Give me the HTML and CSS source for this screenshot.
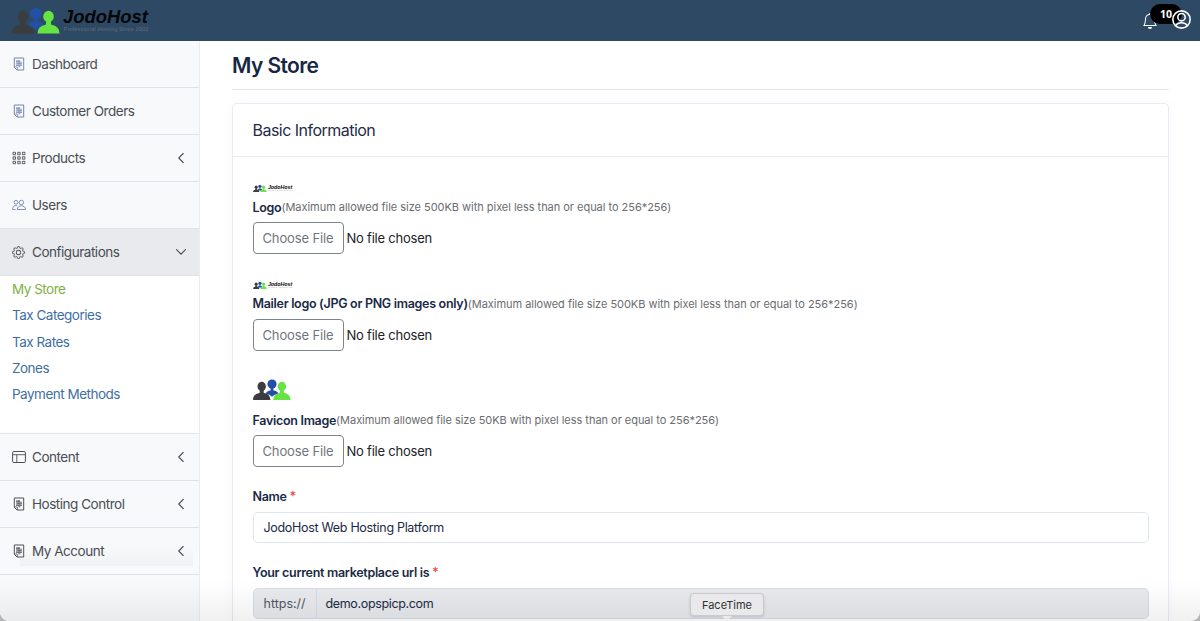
FILE: index.html
```html
<!DOCTYPE html>
<html lang="en">
<head>
<meta charset="utf-8">
<title>My Store</title>
<link rel="stylesheet" href="styles.css">
</head>
<body>
<svg class="defs" aria-hidden="true">
  <symbol id="people" viewBox="0 0 48 28">
    <g fill="#2350a4"><circle cx="24" cy="6.500" r="5.800"/><path d="M22.200 11h3.600v3.500q5 .5 6 3.500-1 2-4.500 2L24 22.500 20.700 20q-3.500 0-4.500-2 1-3 6-3.500z"/></g>
    <g fill="#3b3c3e"><ellipse cx="11" cy="9.500" rx="5.300" ry="5.800"/><path d="M8.500 14h5v3.500Q22 19 22 26.500H0Q0 19 8.500 17.500z"/></g>
    <g fill="#66e444"><ellipse cx="36.500" cy="9.500" rx="5.300" ry="5.800"/><path d="M34 14h5v3.500q8.500 1.500 8.500 9h-22Q25.500 19 34 17.500z"/></g>
  </symbol>
  <symbol id="logo" viewBox="0 0 138 28" overflow="visible">
    <use href="#people" width="48" height="28"/>
    <text x="51.500" y="16.500" textLength="84" lengthAdjust="spacingAndGlyphs" class="logo-name">JodoHost</text>
    <text x="52" y="24" textLength="84" lengthAdjust="spacingAndGlyphs" class="logo-tag">Professional Hosting Since 2002</text>
  </symbol>
  <symbol id="doc" viewBox="0 0 14 14">
    <path d="M2.300 1h9.400v12H5L2.300 10.300z" fill="none" stroke="currentColor"/>
    <path d="M2.300 10h3v3" fill="none" stroke="currentColor" stroke-width=".8"/>
    <path d="M4 3h4v1.500h2V9H8.500v1.500h-2V9H4z" fill="currentColor" opacity=".5"/>
    <path d="M4 4.500h4M5 6.500h5M4 8.500h6M7 3v7" fill="none" stroke="currentColor" stroke-width=".5"/>
  </symbol>
  <symbol id="grid" viewBox="0 0 14 14">
    <path d="M1 1.300h2.500v2.400H1zM5.700 1.300h2.500v2.400H5.700zM10.400 1.300h2.500v2.400h-2.500zM1 5.800h2.500v2.400H1zM5.700 5.800h2.500v2.400H5.700zM10.400 5.800h2.500v2.400h-2.500zM1 10.300h2.500v2.400H1zM5.700 10.300h2.500v2.400H5.700zM10.400 10.300h2.500v2.400h-2.500z" fill="none" stroke="currentColor" stroke-width=".9"/>
  </symbol>
  <symbol id="users" viewBox="0 0 14 14">
    <g fill="none" stroke="currentColor" stroke-width=".9"><circle cx="4" cy="4.300" r="1.900"/><circle cx="9.400" cy="4.500" r="2.200"/><path d="M5.200 11.500c0-5 8.300-5 8.300 0zM5.200 7.800C2.500 7 .7 8.400.6 11.500h3"/></g>
  </symbol>
  <symbol id="gear" viewBox="0 0 16 16">
    <path fill="currentColor" d="M8 4.754a3.246 3.246 0 1 0 0 6.492 3.246 3.246 0 0 0 0-6.492M5.754 8a2.246 2.246 0 1 1 4.492 0 2.246 2.246 0 0 1-4.492 0"/>
    <path fill="currentColor" d="M9.796 1.343c-.527-1.790-3.065-1.790-3.592 0l-.094.319a.873.873 0 0 1-1.255.520l-.292-.160c-1.640-.892-3.433.902-2.540 2.541l.159.292a.873.873 0 0 1-.520 1.255l-.319.094c-1.790.527-1.790 3.065 0 3.592l.319.094a.873.873 0 0 1 .520 1.255l-.160.292c-.892 1.640.901 3.434 2.541 2.540l.292-.159a.873.873 0 0 1 1.255.520l.094.319c.527 1.790 3.065 1.790 3.592 0l.094-.319a.873.873 0 0 1 1.255-.520l.292.160c1.640.893 3.434-.902 2.540-2.541l-.159-.292a.873.873 0 0 1 .520-1.255l.319-.094c1.790-.527 1.790-3.065 0-3.592l-.319-.094a.873.873 0 0 1-.520-1.255l.160-.292c.893-1.640-.902-3.433-2.541-2.540l-.292.159a.873.873 0 0 1-1.255-.520zm-2.633.283c.246-.835 1.428-.835 1.674 0l.094.319a1.873 1.873 0 0 0 2.693 1.115l.291-.160c.764-.415 1.600.420 1.184 1.185l-.159.292a1.873 1.873 0 0 0 1.116 2.692l.318.094c.835.246.835 1.428 0 1.674l-.319.094a1.873 1.873 0 0 0-1.115 2.693l.160.291c.415.764-.420 1.600-1.185 1.184l-.291-.159a1.873 1.873 0 0 0-2.693 1.116l-.094.318c-.246.835-1.428.835-1.674 0l-.094-.319a1.873 1.873 0 0 0-2.692-1.115l-.292.160c-.764.415-1.600-.420-1.184-1.185l.159-.291A1.873 1.873 0 0 0 1.945 8.930l-.319-.094c-.835-.246-.835-1.428 0-1.674l.319-.094A1.873 1.873 0 0 0 3.060 4.377l-.160-.292c-.415-.764.420-1.600 1.185-1.184l.292.159a1.873 1.873 0 0 0 2.692-1.115z"/>
  </symbol>
  <symbol id="layout" viewBox="0 0 14 14">
    <rect x=".6" y="1.500" width="12.800" height="11" rx="1.300" fill="none" stroke="currentColor"/><path d="M.6 4.700h12.800M4.800 4.700v7.800" stroke="currentColor" stroke-width=".9"/>
  </symbol>
  <symbol id="left" viewBox="0 0 12 12"><path d="M8.200 1.500 3.700 6l4.500 4.500" fill="none" stroke="currentColor" stroke-width="1.100" stroke-linecap="round"/></symbol>
  <symbol id="down" viewBox="0 0 12 12"><path d="M1.500 3.700 6 8.200l4.500-4.500" fill="none" stroke="currentColor" stroke-width="1.100" stroke-linecap="round"/></symbol>
</svg>

<header class="topbar">
  <svg class="brand" viewBox="0 -7 150 41">
    <use href="#people" width="48" height="28"/>
    <text x="51" y="16" textLength="85" lengthAdjust="spacingAndGlyphs" class="logo-name">JodoHost</text>
    <text x="51.500" y="24" textLength="85" lengthAdjust="spacingAndGlyphs" class="logo-tag">Professional Hosting Since 2002</text>
  </svg>
  <div class="tools">
    <svg class="bell" viewBox="0 0 16 16"><path fill="currentColor" d="M8 16a2 2 0 0 0 2-2H6a2 2 0 0 0 2 2M8 1.918l-.797.161A4 4 0 0 0 4 6c0 .628-.134 2.197-.459 3.742-.160.767-.376 1.566-.663 2.258h10.244c-.287-.692-.502-1.490-.663-2.258C12.134 8.197 12 6.628 12 6a4 4 0 0 0-3.203-3.920zM14.220 12c.223.447.481.801.780 1H1c.299-.199.557-.553.780-1C2.680 10.200 3 6.880 3 6c0-2.420 1.720-4.440 4.005-4.901a1 1 0 1 1 1.990 0A5 5 0 0 1 13 6c0 .880.320 4.200 1.220 6"/></svg>
    <span class="count">10</span>
    <svg class="user" viewBox="0 0 18 18"><g fill="none" stroke="currentColor" stroke-width="1.500"><circle cx="9" cy="9" r="8.200"/><circle cx="9" cy="6.800" r="3.500"/><path d="M3.300 15c2.300-4 9.100-4 11.400 0"/></g></svg>
  </div>
</header>

<div class="shell">
  <nav class="sidebar">
    <a class="item tinted"><svg class="ico"><use href="#doc"/></svg><span>Dashboard</span></a>
    <a class="item tinted"><svg class="ico"><use href="#doc"/></svg><span>Customer Orders</span></a>
    <a class="item"><svg class="ico"><use href="#grid"/></svg><span>Products</span><svg class="chev"><use href="#left"/></svg></a>
    <a class="item tinted"><svg class="ico"><use href="#users"/></svg><span>Users</span></a>
    <a class="item active"><svg class="ico small" viewBox="0 0 16 16"><use href="#gear"/></svg><span>Configurations</span><svg class="chev"><use href="#down"/></svg></a>
    <div class="submenu">
      <a class="current">My Store</a>
      <a>Tax Categories</a>
      <a>Tax Rates</a>
      <a>Zones</a>
      <a>Payment Methods</a>
    </div>
    <a class="item"><svg class="ico"><use href="#layout"/></svg><span>Content</span><svg class="chev"><use href="#left"/></svg></a>
    <a class="item"><svg class="ico"><use href="#doc"/></svg><span>Hosting Control</span><svg class="chev"><use href="#left"/></svg></a>
    <a class="item last"><svg class="ico"><use href="#doc"/></svg><span>My Account</span><svg class="chev"><use href="#left"/></svg></a>
  </nav>

  <main class="main">
    <h1>My Store</h1>
    <section class="card">
      <h2>Basic Information</h2>
      <div class="body">
        <div class="upload">
          <svg class="thumb"><use href="#logo"/></svg>
          <div class="label"><b>Logo</b><small>(Maximum allowed file size 500KB with pixel less than or equal to 256*256)</small></div>
          <div class="file"><button>Choose File</button><span>No file chosen</span></div>
        </div>
        <div class="upload">
          <svg class="thumb"><use href="#logo"/></svg>
          <div class="label"><b>Mailer logo (JPG or PNG images only)</b><small>(Maximum allowed file size 500KB with pixel less than or equal to 256*256)</small></div>
          <div class="file"><button>Choose File</button><span>No file chosen</span></div>
        </div>
        <div class="upload favicon">
          <svg class="thumb"><use href="#people"/></svg>
          <div class="label"><b>Favicon Image</b><small>(Maximum allowed file size 50KB with pixel less than or equal to 256*256)</small></div>
          <div class="file"><button>Choose File</button><span>No file chosen</span></div>
        </div>
        <div class="field">
          <div class="label"><b>Name <i>*</i></b></div>
          <div class="input">JodoHost Web Hosting Platform</div>
        </div>
        <div class="field url">
          <div class="label"><b>Your current marketplace url is <i>*</i></b></div>
          <div class="group"><span class="prefix">https://</span><span class="value">demo.opspicp.com</span></div>
        </div>
      </div>
    </section>
  </main>
</div>
<div class="shade"></div>
<div class="tooltip">FaceTime</div>
</body>
</html>
```
FILE: styles.css
```css
* { box-sizing: border-box; }
html { background: #b5b5b5; }
body { margin: 0; height: 621px; overflow: hidden; position: relative; background: #b5b5b5; font-family: Inter, "Liberation Sans", sans-serif; font-size: 13px; color: #1b2a45; display: flex; flex-direction: column; }
.defs { position: absolute; width: 0; height: 0; }
svg { display: block; flex: none; }
.logo-name { font: italic bold 17.500px "Liberation Sans", sans-serif; fill: #050608; }
.logo-tag { font: 6px "Liberation Sans", sans-serif; fill: #777c83; fill-opacity: .7; }

.topbar { flex: none; height: 41px; background: #2e4964; display: flex; justify-content: space-between; padding: 0 9px 0 11.500px; }
.brand { width: 150px; height: 41px; }
.tools { display: flex; padding-top: 7px; color: #fff; }
.bell { width: 16px; height: 16px; margin-top: 5.500px; }
.count { width: 32px; height: 20px; margin: -3px 0 0 -8px; padding-left: 10px; border-radius: 10px; background: #000; font: bold 10.500px/20px "Open Sans", sans-serif; }
.user { width: 19px; height: 19px; margin: 3px 0 0 -10px; }

.shell { flex: 1; min-height: 0; display: flex; background: #fff; border-radius: 0 0 9px 9px; overflow: hidden; }
.sidebar { width: 200px; flex: none; background: #f8f9fb; border-right: 1px solid #ebecef; }
.item { display: flex; align-items: center; height: 47px; padding: 0 12px; border-bottom: 1px solid #e0e2e7; color: #484d54; font-size: 13.500px; letter-spacing: -.47px; }
.ico { width: 14px; height: 14px; margin-right: 6px; color: #4b5056; }
.ico.small { width: 13px; height: 13px; margin-right: 7px; }
.tinted .ico { color: #7384ac; }
.chev { width: 12px; height: 12px; margin-left: auto; }
.active { background: #e9eaee; }
.last { background: linear-gradient(rgba(0, 0, 0, 0), rgba(0, 0, 0, .03)) 20px 18px / 173px 20px no-repeat; }
.submenu { height: 158px; padding: 0 12px; background: #fff; border-bottom: 1px solid #e4e6ea; display: flex; flex-direction: column; }
.submenu a { height: 26.300px; line-height: 26.300px; color: #406f9f; font-size: 13.500px; letter-spacing: -.5px; }
.submenu .current { color: #81b144; }

.main { flex: 1; padding: 0 31px 0 32px; }
h1 { margin: 0; height: 49px; line-height: 49px; border-bottom: 1px solid #e6e7e9; font-size: 21px; font-weight: 600; letter-spacing: -.6px; color: #172743; }
.card { margin-top: 13px; height: 518px; border: 1px solid #e6ecf5; border-bottom: 0; border-radius: 5px 5px 0 0; box-shadow: 0 0 12px rgba(40, 50, 80, .03); }
h2 { margin: 0; height: 53px; padding-left: 19.500px; line-height: 53px; border-bottom: 1px solid #e6ecf5; font-size: 16px; font-weight: 400; letter-spacing: -.52px; color: #1f2c47; }
.body { padding: 27px 19px 0 19.500px; }
.upload { height: 96.500px; }
.thumb { width: 40px; height: 9px; }
.label { display: flex; align-items: center; height: 16px; margin-top: 6px; font-size: 12.500px; white-space: nowrap; }
.label b { font-weight: 600; letter-spacing: -.3px; }
.label small { font-size: 11px; letter-spacing: -.03px; color: #6a6c70; }
.label i { color: #e6504a; font-style: normal; }
.file { display: flex; align-items: center; margin-top: 7px; font-size: 13px; letter-spacing: -.22px; color: #202226; }
.file button { width: 91px; height: 32px; margin-right: 3px; padding: 0; border: 1px solid #7d848b; border-radius: 4px; background: #fff; color: #70767d; font: inherit; letter-spacing: -.12px; }
.favicon { height: 111.500px; }
.favicon .thumb { width: 38px; height: 26px; }
.favicon .label { margin-top: 9px; }
.field { height: 76px; }
.url { height: 54px; }
.field .label { margin: 0; }
.input { height: 31px; margin-top: 7px; padding-left: 10px; line-height: 30px; border: 1px solid #dfe6f1; border-radius: 5px; font-size: 12.500px; letter-spacing: -.31px; }
.group { display: flex; height: 31px; margin-top: 7px; border: 1px solid #d6dce7; border-radius: 5px; background: #e9eaee; line-height: 30px; font-size: 12.500px; letter-spacing: -.35px; }
.prefix { width: 63px; padding-left: 10px; border-right: 1px solid #d3dbe7; color: #50565e; letter-spacing: 0; }
.value { padding-left: 9px; }

.shade { position: absolute; left: 0; right: 0; bottom: 0; height: 40px; border-radius: 0 0 9px 9px; background: linear-gradient(rgba(0, 0, 0, 0), rgba(0, 0, 0, .06)); }
.tooltip { position: absolute; left: 690px; top: 593px; width: 74px; height: 23px; border: 1px solid #c9cacd; border-radius: 4px; background: #e9e9eb; box-shadow: 0 1px 3px rgba(0, 0, 0, .15); text-align: center; font-size: 11px; line-height: 22px; color: #303134; }
.tooltip::after { content: ""; position: absolute; left: 31px; top: 22px; border: 5px solid transparent; border-bottom: 0; border-top-color: #e9e9eb; }
```
